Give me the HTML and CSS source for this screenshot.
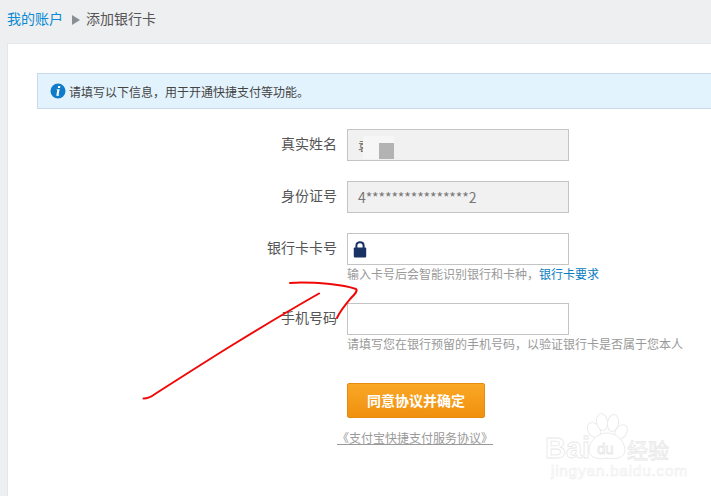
FILE: index.html
```html
<!DOCTYPE html>
<html lang="zh-CN">
<head>
<meta charset="utf-8">
<title>添加银行卡</title>
<link rel="stylesheet" href="styles.css">
</head>
<body>
<div class="page">
  <nav class="crumbs">
    <a class="crumb-link" href="#">我的账户</a>
    <span class="crumb-arrow"></span>
    <span class="crumb-current">添加银行卡</span>
  </nav>
  <main class="card">
    <div class="notice">
      <svg class="info-icon" viewBox="0 0 16 16" aria-hidden="true">
        <circle cx="8" cy="8" r="7.5" fill="#0f7ccb"/>
        <path d="M8.2 2.9h2.2l-.4 2H7.8zM7.4 6.3h2.3L8.6 11.2c-.1.4 0 .6.6.6l-.2.9H6.3l.9-5.1c.1-.4-.1-.5-.6-.5l.2-.8z" fill="#fff"/>
      </svg>
      <span>请填写以下信息，用于开通快捷支付等功能。</span>
    </div>
    <form class="form">
      <div class="row">
        <label class="label">真实姓名</label>
        <div class="field field-readonly">
          <span class="name-value">袁</span>
          <span class="mosaic"><span class="mosaic-dark"></span></span>
        </div>
      </div>
      <div class="row">
        <label class="label">身份证号</label>
        <div class="field field-readonly"><span class="id-value">4****************2</span></div>
      </div>
      <div class="row">
        <label class="label">银行卡卡号</label>
        <div class="field">
          <svg class="lock-icon" viewBox="0 0 14 17" aria-hidden="true">
            <path d="M3.4 7V4.4C3.4 2.3 5 1.2 7 1.2s3.6 1.1 3.6 3.2V7" fill="none" stroke="#1a3263" stroke-width="2"/>
            <rect x="0.8" y="6.4" width="12.4" height="10" rx="0.8" fill="#1a3263"/>
          </svg>
        </div>
        <p class="hint">输入卡号后会智能识别银行和卡种，<a class="hint-link" href="#">银行卡要求</a></p>
      </div>
      <div class="row">
        <label class="label">手机号码</label>
        <div class="field"></div>
        <p class="hint">请填写您在银行预留的手机号码，以验证银行卡是否属于您本人</p>
      </div>
      <div class="actions">
        <button class="submit" type="button">同意协议并确定</button>
        <a class="agreement" href="#">《支付宝快捷支付服务协议》</a>
      </div>
    </form>
  </main>

  <svg class="scribble" viewBox="0 0 711 496" aria-hidden="true">
    <path d="M290 283C303 282 318 283 330 284C340 285 350 287 356 289C358 291 355 294 351 298C346 304 340 311 337 318" fill="none" stroke="#f00808" stroke-width="2" stroke-linecap="round"/>
    <path d="M319 293.5C290 310 260 328 230 346.5C205 362 180 378 155 394C151 397 147 398.5 143.5 398.5" fill="none" stroke="#f00808" stroke-width="2" stroke-linecap="round"/>
  </svg>

  <svg class="watermark" viewBox="0 0 170 90" aria-hidden="true">
    <g class="wm-paw">
      <ellipse cx="49" cy="30" rx="6" ry="8" transform="rotate(-35 49 30)"/>
      <ellipse cx="57" cy="22" rx="5.5" ry="8.5" transform="rotate(-10 57 22)"/>
      <ellipse cx="68" cy="23" rx="5.5" ry="8.5" transform="rotate(10 68 23)"/>
      <ellipse cx="76" cy="32" rx="5.5" ry="8" transform="rotate(35 76 32)"/>
      <path d="M62 33C72 33 80 42 80 50C80 58 70 60 62 58C54 60 44 58 44 50C44 42 52 33 62 33Z"/>
    </g>
    <text class="wm-logo" x="0" y="58">Bai</text>
    <text class="wm-du" x="52" y="54">du</text>
    <text class="wm-cn" x="82" y="58">经验</text>
    <text class="wm-url" x="6" y="76">jingyan.baidu.com</text>
  </svg>
</div>
</body>
</html>
```
FILE: styles.css
```css
* {
  box-sizing: border-box;
}

html,
body {
  margin: 0;
  padding: 0;
}

body {
  background: #eeeff1;
  font-family: "Noto Sans CJK SC", "Liberation Sans", sans-serif;
  color: #555;
}

.page {
  position: relative;
  width: 711px;
  height: 496px;
  overflow: hidden;
}

.crumbs {
  display: flex;
  align-items: center;
  height: 43px;
  padding: 0 0 7px 7px;
  font-size: 14px;
}

.crumb-link {
  color: #0a8ad2;
  text-decoration: none;
}

.crumb-arrow {
  width: 0;
  height: 0;
  margin: 3px 6px 0 9px;
  border-style: solid;
  border-width: 5.5px 0 5.5px 8px;
  border-color: transparent transparent transparent #8a8f96;
}

.crumb-current {
  color: #555;
}

.card {
  width: 760px;
  height: 500px;
  margin-left: 7px;
  padding: 29px 0 0 29px;
  background: #fff;
  border: 1px solid #e6e6e6;
}

.notice {
  display: flex;
  align-items: center;
  gap: 3px;
  height: 36px;
  padding-left: 12px;
  background: #e3f3fd;
  border: 1px solid #c9d9e8;
  font-size: 12px;
  color: #444;
}

.info-icon {
  width: 16px;
  height: 16px;
  flex: none;
}

.form {
  padding-top: 20px;
}

.row {
  display: grid;
  grid-template-columns: 300px 222px;
  column-gap: 10px;
  align-items: center;
  margin-bottom: 20px;
}

.label {
  padding-bottom: 4px;
  text-align: right;
  font-size: 14px;
  line-height: 20px;
  color: #555;
}

.field {
  position: relative;
  display: flex;
  align-items: center;
  height: 32px;
  padding-left: 10px;
  background: #fff;
  border: 1px solid #c4c4c4;
  font-size: 12px;
}

.field-readonly {
  background: #f1f1f1;
}

.id-value {
  font-size: 14px;
  letter-spacing: -0.1px;
  color: #777;
}

.name-value {
  white-space: nowrap;
  color: #666;
}

.mosaic {
  position: absolute;
  left: 15px;
  top: 6px;
  width: 31px;
  height: 23px;
  background: #f6f6f6;
}

.mosaic-dark {
  position: absolute;
  right: 0;
  bottom: 0;
  width: 15px;
  height: 16px;
  background: #b3b3b3;
}

.lock-icon {
  width: 14px;
  height: 17px;
  margin-left: -5px;
}

.hint {
  grid-column: 2 / 3;
  margin: 0;
  height: 18px;
  font-size: 12px;
  line-height: 18px;
  color: #999;
  white-space: nowrap;
}

.hint-link {
  color: #0a7cc0;
  text-decoration: none;
}

.actions {
  display: flex;
  flex-direction: column;
  align-items: flex-start;
  padding: 10px 0 0 310px;
}

.submit {
  width: 138px;
  height: 35px;
  padding: 0 0 2px;
  background: linear-gradient(#f9a825, #f0900f);
  border: 1px solid #e78a0d;
  border-radius: 2px;
  color: #fff;
  font-family: inherit;
  font-size: 14px;
  font-weight: 700;
}

.agreement {
  margin: 13px 0 0 -10px;
  width: 156px;
  font-size: 12px;
  line-height: 13px;
  color: #999;
  text-decoration: none;
  border-bottom: 1px solid #999;
  white-space: nowrap;
}

.scribble {
  position: absolute;
  left: 0;
  top: 0;
  width: 711px;
  height: 496px;
  pointer-events: none;
}

.watermark {
  position: absolute;
  left: 545px;
  top: 400px;
  width: 170px;
  height: 90px;
  pointer-events: none;
}

.wm-paw {
  fill: #fff;
  stroke: #ebebeb;
  stroke-width: 1;
}

.wm-logo,
.wm-cn,
.wm-du,
.wm-url {
  fill: #fff;
  stroke: #e8e8e8;
  stroke-width: 0.8;
  font-family: "Liberation Sans", sans-serif;
  font-weight: 700;
}

.wm-logo {
  font-size: 29px;
}

.wm-du {
  font-size: 15px;
  font-weight: 400;
}

.wm-cn {
  font-family: "Noto Sans CJK SC", sans-serif;
  font-size: 21px;
  font-weight: 400;
}

.wm-url {
  font-size: 15.5px;
  font-weight: 400;
  letter-spacing: 0.7px;
  stroke-width: 0.6;
  stroke: #eee;
}
```
